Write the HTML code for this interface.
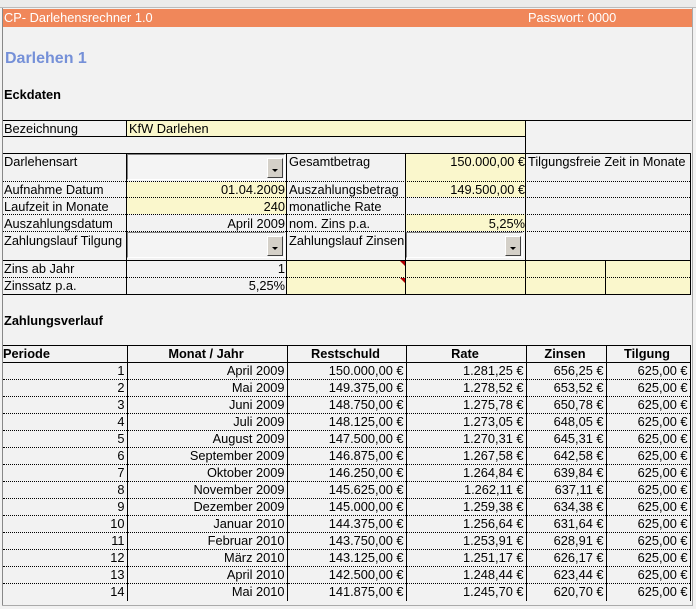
<!DOCTYPE html>
<html><head><meta charset="utf-8"><style>
*{margin:0;padding:0;box-sizing:border-box}
body{width:696px;height:609px;background:#f2f2f2;font-family:"Liberation Sans",Arial,sans-serif;font-size:12.8px;color:#000;position:relative;overflow:hidden}
.a{position:absolute}
.t{position:absolute;line-height:16px;white-space:nowrap}
.r{text-align:right}
.y{background:#faf7cc}
.h{background:#000;position:absolute}
.d{position:absolute;border-top:1px dotted #000;height:0}
.dd{position:absolute;background:#f4f4f4;border:1px solid #808080;border-right-color:#fff;border-bottom-color:#fff}
.btn{position:absolute;right:1px;bottom:1px;width:16px;height:20px;background:#d4d0c8;border:1px solid #fff;border-right-color:#404040;border-bottom-color:#404040}
.btn:after{content:"";position:absolute;left:4px;top:10px;border-left:3px solid transparent;border-right:3px solid transparent;border-top:3px solid #000}
table{position:absolute;left:3px;top:345px;border-collapse:collapse;table-layout:fixed}
td,th{height:17px;padding:0 2px 0 0;text-align:right;border-bottom:1px dotted #000;border-right:1px solid #000;line-height:16px;white-space:nowrap;font-weight:normal}
th{font-weight:bold;text-align:center;border-top:1px solid #000;border-bottom:1px solid #000;height:17px}
th:first-child{text-align:left}
</style></head><body>
<div class="a" style="left:0;top:0;width:696px;height:8px;background:#ebebeb;border-bottom:1px solid #bbb"></div>
<div class="a" style="left:2px;top:8px;width:1px;height:597px;background:#888"></div>
<div class="a" style="left:692px;top:8px;width:1px;height:597px;background:#aaa"></div>
<div class="a" style="left:2px;top:605px;width:691px;height:1px;background:#aaa"></div>
<div class="a" style="left:3px;top:9px;width:689px;height:18px;background:#f0875a"></div>
<div class="t" style="left:4px;top:10px;color:#fff">CP- Darlehensrechner 1.0</div>
<div class="t" style="left:528px;top:10px;color:#fff">Passwort: 0000</div>
<div class="t" style="left:5px;top:50px;font-size:16px;font-weight:bold;color:#7590d8;line-height:18px">Darlehen 1</div>
<div class="t" style="left:4px;top:87px;font-weight:bold">Eckdaten</div>

<!-- yellow fills first -->
<div class="a y" style="left:127px;top:120px;width:398px;height:16px"></div>
<div class="a y" style="left:406px;top:154px;width:119px;height:43px"></div>
<div class="a y" style="left:127px;top:182px;width:159px;height:32px"></div>
<div class="a y" style="left:406px;top:214px;width:119px;height:17px"></div>
<div class="a y" style="left:287px;top:261px;width:403px;height:33px"></div>

<div class="h" style="left:3px;top:120px;width:688px;height:1px"></div>
<div class="h" style="left:3px;top:136px;width:523px;height:1px"></div>
<div class="h" style="left:126px;top:120px;width:1px;height:17px"></div>
<div class="h" style="left:525px;top:120px;width:1px;height:174px"></div>
<div class="t" style="left:4px;top:121px">Bezeichnung</div>
<div class="t" style="left:129px;top:121px">KfW Darlehen</div>

<div class="h" style="left:3px;top:153px;width:688px;height:1px"></div>
<div class="h" style="left:3px;top:260px;width:688px;height:1px"></div>
<div class="h" style="left:3px;top:294px;width:688px;height:1px"></div>
<div class="h" style="left:126px;top:153px;width:1px;height:141px"></div>
<div class="h" style="left:286px;top:153px;width:1px;height:141px"></div>
<div class="h" style="left:405px;top:153px;width:1px;height:141px"></div>
<div class="h" style="left:605px;top:260px;width:1px;height:34px"></div>
<div class="h" style="left:690px;top:153px;width:1px;height:141px"></div>
<div class="d" style="left:3px;top:181px;width:687px"></div>
<div class="d" style="left:3px;top:197px;width:687px"></div>
<div class="d" style="left:3px;top:214px;width:687px"></div>
<div class="d" style="left:3px;top:231px;width:687px"></div>
<div class="d" style="left:3px;top:277px;width:687px"></div>
<div class="a" style="left:400px;top:261px;border-left:5px solid transparent;border-top:5px solid #b00000"></div>
<div class="a" style="left:400px;top:278px;border-left:5px solid transparent;border-top:5px solid #b00000"></div>

<div class="dd" style="left:127px;top:154px;width:158px;height:26px"><div class="btn"></div></div>
<div class="dd" style="left:127px;top:232px;width:158px;height:26px"><div class="btn"></div></div>
<div class="dd" style="left:406px;top:232px;width:117px;height:26px"><div class="btn"></div></div>

<div class="t" style="left:4px;top:154px">Darlehensart</div>
<div class="t" style="left:289px;top:154px">Gesamtbetrag</div>
<div class="t r" style="left:406px;top:154px;width:119px">150.000,00 €</div>
<div class="t" style="left:528px;top:154px">Tilgungsfreie Zeit in Monate</div>
<div class="t" style="left:4px;top:182px">Aufnahme Datum</div>
<div class="t r" style="left:127px;top:182px;width:158px">01.04.2009</div>
<div class="t" style="left:289px;top:182px">Auszahlungsbetrag</div>
<div class="t r" style="left:406px;top:182px;width:119px">149.500,00 €</div>
<div class="t" style="left:4px;top:199px">Laufzeit in Monate</div>
<div class="t r" style="left:127px;top:199px;width:158px">240</div>
<div class="t" style="left:289px;top:199px">monatliche Rate</div>
<div class="t" style="left:4px;top:216px">Auszahlungsdatum</div>
<div class="t r" style="left:127px;top:216px;width:158px">April 2009</div>
<div class="t" style="left:289px;top:216px">nom. Zins p.a.</div>
<div class="t r" style="left:406px;top:216px;width:119px">5,25%</div>
<div class="t" style="left:4px;top:233px">Zahlungslauf Tilgung</div>
<div class="t" style="left:289px;top:233px">Zahlungslauf Zinsen</div>
<div class="t" style="left:4px;top:261px">Zins ab Jahr</div>
<div class="t r" style="left:127px;top:261px;width:158px">1</div>
<div class="t" style="left:4px;top:278px">Zinssatz p.a.</div>
<div class="t r" style="left:127px;top:278px;width:158px">5,25%</div>

<div class="t" style="left:4px;top:313px;font-weight:bold">Zahlungsverlauf</div>

<table>
<colgroup><col style="width:124px"><col style="width:160px"><col style="width:119px"><col style="width:120px"><col style="width:80px"><col style="width:84px"></colgroup>
<tr><th>Periode</th><th>Monat / Jahr</th><th>Restschuld</th><th>Rate</th><th>Zinsen</th><th>Tilgung</th></tr>
<tr><td>1</td><td>April 2009</td><td>150.000,00 €</td><td>1.281,25 €</td><td>656,25 €</td><td>625,00 €</td></tr>
<tr><td>2</td><td>Mai 2009</td><td>149.375,00 €</td><td>1.278,52 €</td><td>653,52 €</td><td>625,00 €</td></tr>
<tr><td>3</td><td>Juni 2009</td><td>148.750,00 €</td><td>1.275,78 €</td><td>650,78 €</td><td>625,00 €</td></tr>
<tr><td>4</td><td>Juli 2009</td><td>148.125,00 €</td><td>1.273,05 €</td><td>648,05 €</td><td>625,00 €</td></tr>
<tr><td>5</td><td>August 2009</td><td>147.500,00 €</td><td>1.270,31 €</td><td>645,31 €</td><td>625,00 €</td></tr>
<tr><td>6</td><td>September 2009</td><td>146.875,00 €</td><td>1.267,58 €</td><td>642,58 €</td><td>625,00 €</td></tr>
<tr><td>7</td><td>Oktober 2009</td><td>146.250,00 €</td><td>1.264,84 €</td><td>639,84 €</td><td>625,00 €</td></tr>
<tr><td>8</td><td>November 2009</td><td>145.625,00 €</td><td>1.262,11 €</td><td>637,11 €</td><td>625,00 €</td></tr>
<tr><td>9</td><td>Dezember 2009</td><td>145.000,00 €</td><td>1.259,38 €</td><td>634,38 €</td><td>625,00 €</td></tr>
<tr><td>10</td><td>Januar 2010</td><td>144.375,00 €</td><td>1.256,64 €</td><td>631,64 €</td><td>625,00 €</td></tr>
<tr><td>11</td><td>Februar 2010</td><td>143.750,00 €</td><td>1.253,91 €</td><td>628,91 €</td><td>625,00 €</td></tr>
<tr><td>12</td><td>März 2010</td><td>143.125,00 €</td><td>1.251,17 €</td><td>626,17 €</td><td>625,00 €</td></tr>
<tr><td>13</td><td>April 2010</td><td>142.500,00 €</td><td>1.248,44 €</td><td>623,44 €</td><td>625,00 €</td></tr>
<tr><td style="border-bottom:none">14</td><td style="border-bottom:none">Mai 2010</td><td style="border-bottom:none">141.875,00 €</td><td style="border-bottom:none">1.245,70 €</td><td style="border-bottom:none">620,70 €</td><td style="border-bottom:none">625,00 €</td></tr>
</table>
</body></html>
